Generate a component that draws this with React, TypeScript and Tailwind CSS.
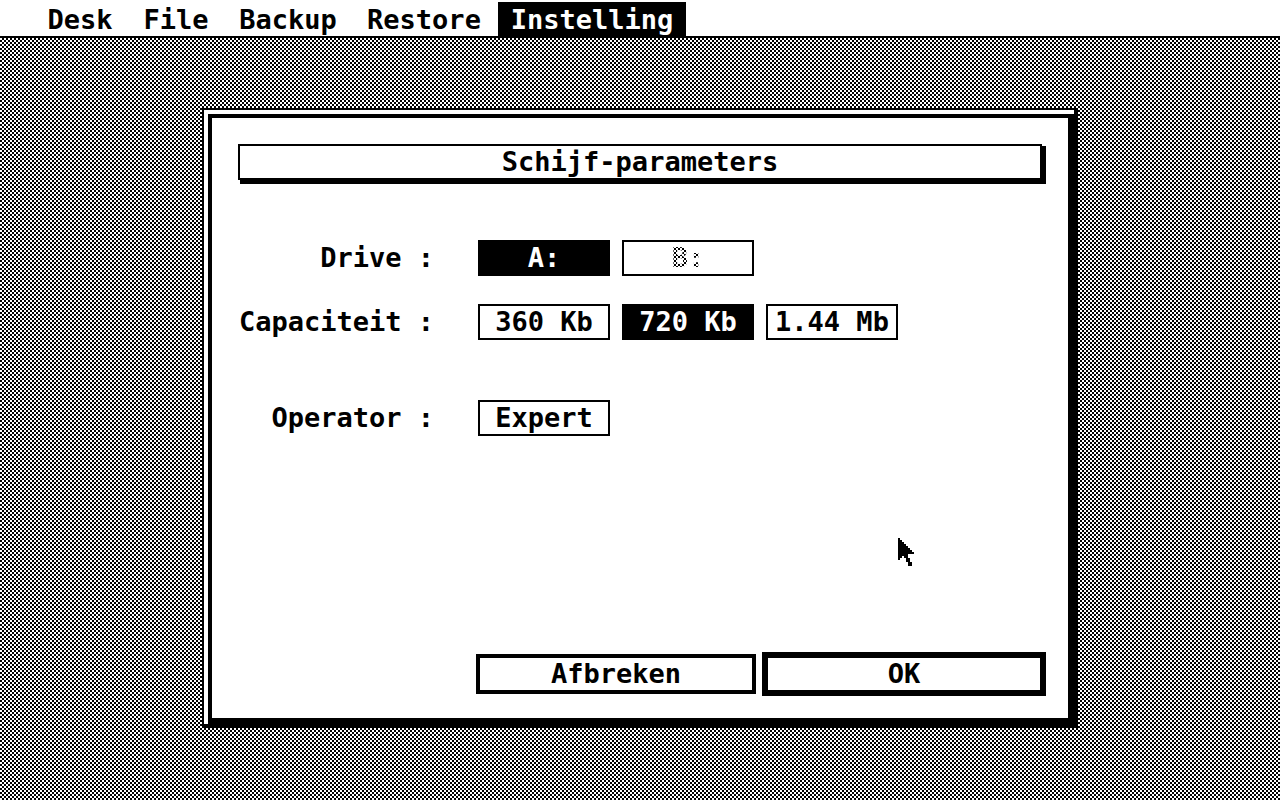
import { useState, type ReactNode } from "react";

const menus = ["Desk", "File", "Backup", "Restore", "Instelling"];
const capacities = ["360 Kb", "720 Kb", "1.44 Mb"];

// width of one character cell in the menu bar
const CELL = 16;

type OptionProps = {
  label: string;
  selected?: boolean;
  disabled?: boolean;
  onClick?: () => void;
};

function Option({ label, selected, disabled, onClick }: OptionProps) {
  return (
    <button
      type="button"
      disabled={disabled}
      aria-pressed={selected}
      onClick={onClick}
      className={`h-9 w-33 border-2 border-black whitespace-pre ${
        selected ? "bg-black text-white" : "bg-white text-black"
      }`}
    >
      {disabled ? (
        <span className="bg-[repeating-conic-gradient(#fff_0_25%,#000_0_50%)] bg-size-[4px_4px] bg-clip-text text-transparent">
          {label}
        </span>
      ) : (
        label
      )}
    </button>
  );
}

function Row({ label, children }: { label: string; children: ReactNode }) {
  return (
    <div role="group" aria-label={label} className="flex gap-3">
      <span className="w-[228px] pr-8 text-right leading-9 whitespace-nowrap">{label} :</span>
      {children}
    </div>
  );
}

function Cursor() {
  return (
    <svg
      className="pointer-events-none absolute right-[154px] bottom-[152px] h-7 w-4"
      viewBox="0 0 16 28"
      shapeRendering="crispEdges"
      aria-hidden="true"
    >
      <path d="M0 0h2v2h2v2h2v2h2v2h2v2h2v2h2v2h2v2h-6v4h2v4h2v4h-4v-4h-2v-4h-2v-2h-2v2h-2v2h-2z" />
    </svg>
  );
}

export default function App() {
  const [menu, setMenu] = useState("Instelling");
  const [capacity, setCapacity] = useState("720 Kb");

  return (
    <div className="flex min-h-screen flex-col bg-[repeating-conic-gradient(#fff_0_25%,#000_0_50%)] bg-size-[4px_4px] font-['DejaVu_Sans_Mono',monospace] text-[27px] leading-8 font-bold text-black">
      <nav className="flex h-[38px] border-b-2 border-black bg-white pt-0.5 pl-8">
        {menus.map((name) => (
          <button
            key={name}
            type="button"
            onClick={() => setMenu(name)}
            style={{ width: (name.length + 2) * CELL - 4 }}
            className={`mx-0.5 h-9 ${menu === name ? "bg-black text-white" : ""}`}
          >
            {name}
          </button>
        ))}
      </nav>

      <main className="flex justify-center pt-[70px] pr-[18px] pb-[74px] pl-4">
        <div className="w-full max-w-[874px] border-2 border-black bg-white pt-1 pl-1 shadow-[2px_2px_0_#000]">
          <section className="relative border-4 border-r-6 border-b-6 border-black bg-white pt-[26px] pr-[22px] pb-[22px] pl-[26px]">
            <h1 className="mr-1 h-9 border-2 border-black text-center shadow-[3px_3px_0_1px_#000]">
              Schijf-parameters
            </h1>

            <div className="mt-15 flex flex-col gap-7">
              <Row label="Drive">
                <Option label="A:" selected />
                <Option label="B:" disabled />
              </Row>
              <Row label="Capaciteit">
                {capacities.map((size) => (
                  <Option key={size} label={size} selected={capacity === size} onClick={() => setCapacity(size)} />
                ))}
              </Row>
            </div>
            <div className="mt-15">
              <Row label="Operator">
                <Option label="Expert" />
              </Row>
            </div>

            <div className="mt-54 flex items-center justify-end gap-1.5">
              <button type="button" className="h-10 w-70 border-4 border-black">
                Afbreken
              </button>
              <button type="button" className="h-11 w-71 border-6 border-black">
                OK
              </button>
            </div>

            <Cursor />
          </section>
        </div>
      </main>
    </div>
  );
}
